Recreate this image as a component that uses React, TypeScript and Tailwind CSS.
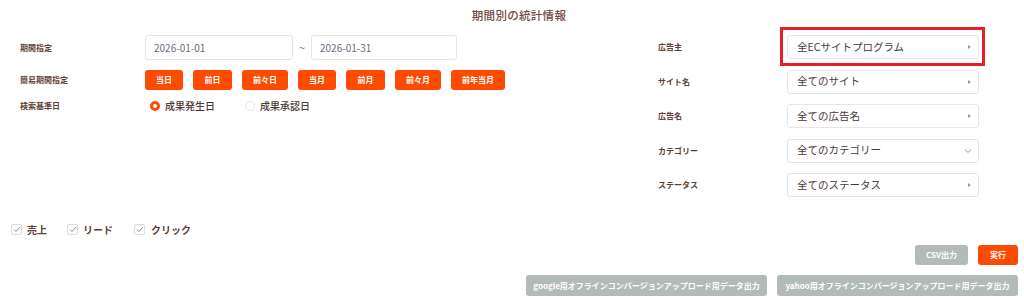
import React from "react";

const Tri = () => (
  <svg width="5" height="6" viewBox="0 0 5 6" className="shrink-0">
    <polygon points="1,1 4,3 1,5" fill="#9a9a9a" />
  </svg>
);

const Chev = () => (
  <svg width="8" height="6" viewBox="0 0 8 6" className="shrink-0">
    <polyline points="1,1.5 4,4.5 7,1.5" fill="none" stroke="#9a9a9a" strokeWidth="1" />
  </svg>
);

const Check = () => (
  <div className="w-[11px] h-[11px] border border-[#dcdcdc] rounded-[2px] flex items-center justify-center">
    <svg width="8" height="7" viewBox="0 0 8 7">
      <polyline points="1,3.5 3,5.5 7,1" fill="none" stroke="#8f8f8f" strokeWidth="1" />
    </svg>
  </div>
);

function Select({ text, chevron, highlight }: { text: string; chevron?: boolean; highlight?: boolean }) {
  return (
    <div className="relative">
      <div className="w-[192px] h-[24px] border border-[#e6e6e6] rounded-[3px] bg-white flex items-center justify-between pl-[9px] pr-[6px]">
        <span className="text-[10.5px] text-[#4a3a34] leading-none">{text}</span>
        {chevron ? <Chev /> : <Tri />}
      </div>
      {highlight && (
        <span className="absolute left-[-7px] right-[-6px] top-[-8px] bottom-[-7px] border-[3px] border-[#e3212a] pointer-events-none" />
      )}
    </div>
  );
}

const Btn = ({ t, w }: { t: string; w: string }) => (
  <div className={"h-[20px] rounded-[3px] bg-[#ff4b00] text-white text-[8px] font-bold flex items-center justify-center " + w}>
    {t}
  </div>
);

export default function App() {
  const label = "text-[8px] font-bold text-[#5d4037] leading-none";
  return (
    <div className="w-[1024px] h-[302px] bg-white font-['Noto_Sans_CJK_JP','Noto_Sans',sans-serif] flex flex-col">
      <div className="h-[32px] flex items-center justify-center pl-[14px]">
        <span className="text-[11.5px] font-medium text-[#6d4c41] tracking-[0.3px]">期間別の統計情報</span>
      </div>
      <div className="flex mt-[3px]">
        <div className="w-[658px] pl-[20px] flex flex-col">
          <div className="h-[25px] flex items-center">
            <div className={"w-[125px] " + label}>期間指定</div>
            <div className="w-[148px] h-[25px] border border-[#e6e6e6] rounded-[3px] flex items-center pl-[8px] text-[10px] text-[#667080]">2026-01-01</div>
            <div className="w-[18px] text-center text-[11px] text-[#777]">~</div>
            <div className="w-[146px] h-[25px] border border-[#e6e6e6] rounded-[3px] flex items-center pl-[8px] text-[10px] text-[#667080]">2026-01-31</div>
          </div>
          <div className="h-[20px] mt-[10px] flex items-center">
            <div className={"w-[125px] " + label}>簡易期間指定</div>
            <div className="flex gap-[10px]">
              <Btn t="当日" w="w-[38px]" />
              <Btn t="前日" w="w-[39px]" />
              <Btn t="前々日" w="w-[46px]" />
              <Btn t="当月" w="w-[38px]" />
              <Btn t="前月" w="w-[39px]" />
              <Btn t="前々月" w="w-[46px]" />
              <Btn t="前年当月" w="w-[54px]" />
            </div>
          </div>
          <div className="h-[12px] mt-[10px] flex items-center">
            <div className={"w-[130px] " + label}>検索基準日</div>
            <div className="w-[10px] h-[10px] rounded-full border-[3px] border-[#ff4b00] bg-white" />
            <span className="ml-[5px] text-[10px] font-medium text-[#4a3a34] leading-none">成果発生日</span>
            <div className="ml-[30px] w-[10px] h-[10px] rounded-full border border-[#e8e8e8] bg-white" />
            <span className="ml-[5px] text-[10px] font-medium text-[#4a3a34] leading-none">成果承認日</span>
          </div>
        </div>
        <div className="flex flex-col gap-[10.5px]">
          {[
            ["広告主", "全ECサイトプログラム", false, true],
            ["サイト名", "全てのサイト", false, false],
            ["広告名", "全ての広告名", false, false],
            ["カテゴリー", "全てのカテゴリー", true, false],
            ["ステータス", "全てのステータス", false, false],
          ].map(([l, t, c, h]) => (
            <div key={l as string} className="flex items-center h-[24px]">
              <div className={"w-[129px] " + label}>{l as string}</div>
              <Select text={t as string} chevron={c as boolean} highlight={h as boolean} />
            </div>
          ))}
        </div>
      </div>
      <div className="mt-[27px] h-[11px] flex items-center pl-[11px]">
        <Check />
        <span className="ml-[5px] text-[10px] font-bold text-[#5d4037] leading-none">売上</span>
        <div className="ml-[20px]"><Check /></div>
        <span className="ml-[5px] text-[10px] font-bold text-[#5d4037] leading-none">リード</span>
        <div className="ml-[21px]"><Check /></div>
        <span className="ml-[6px] text-[10px] font-bold text-[#5d4037] leading-none">クリック</span>
      </div>
      <div className="mt-[10px] h-[20px] flex justify-end pr-[6px] gap-[10px]">
        <div className="w-[53px] h-[20px] rounded-[3px] bg-[#b2bbb8] text-white text-[8px] font-bold flex items-center justify-center">CSV出力</div>
        <div className="w-[40px] h-[20px] rounded-[3px] bg-[#ff4b00] text-white text-[8px] font-bold flex items-center justify-center">実行</div>
      </div>
      <div className="mt-[10px] h-[21px] flex justify-end pr-[6px] gap-[10px]">
        <div className="w-[241px] h-[21px] rounded-[3px] bg-[#b2bbb8] text-white text-[8px] font-bold flex items-center justify-center">google用オフラインコンバージョンアップロード用データ出力</div>
        <div className="w-[241px] h-[21px] rounded-[3px] bg-[#b2bbb8] text-white text-[8px] font-bold flex items-center justify-center">yahoo用オフラインコンバージョンアップロード用データ出力</div>
      </div>
    </div>
  );
}
